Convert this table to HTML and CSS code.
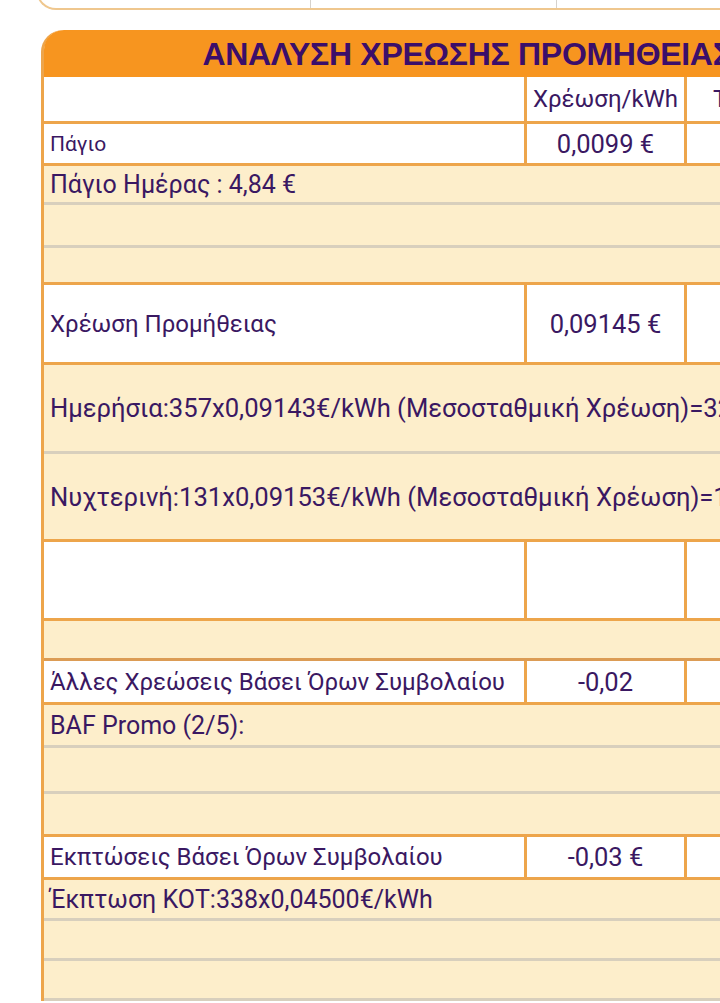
FILE: index.html
```html
<!DOCTYPE html>
<html lang="el">
<head>
  <meta charset="UTF-8">
  <meta name="viewport" content="width=device-width, initial-scale=1.0">
  <title>Ανάλυση Χρέωσης Προμήθειας</title>
  <link rel="stylesheet" href="styles.css">
</head>
<body>
  <!-- bottom edge of the previous box -->
  <div class="prev-box">
    <div class="prev-cell"></div>
    <div class="prev-cell"></div>
    <div class="prev-cell"></div>
  </div>

  <div class="panel">
    <div class="panel-title">ΑΝΑΛΥΣΗ ΧΡΕΩΣΗΣ ΠΡΟΜΗΘΕΙΑΣ</div>

    <div class="row white h47">
      <div class="c1"></div>
      <div class="c2 label">Χρέωση/kWh</div>
      <div class="c3">Τελικό Ποσό</div>
    </div>
    <div class="row white h42">
      <div class="c1 small">Πάγιο</div>
      <div class="c2">0,0099 €</div>
      <div class="c3"></div>
    </div>
    <div class="row cream gray-line h39">Πάγιο Ημέρας : 4,84 €</div>
    <div class="row cream gray-line h43"></div>
    <div class="row cream h37"></div>

    <div class="row white h80">
      <div class="c1">Χρέωση Προμήθειας</div>
      <div class="c2">0,09145 €</div>
      <div class="c3"></div>
    </div>
    <div class="row cream gray-line h89 wide">Ημερήσια:357x0,09143€/kWh (Μεσοσταθμική Χρέωση)=32,64 €</div>
    <div class="row cream h88 wide">Νυχτερινή:131x0,09153€/kWh (Μεσοσταθμική Χρέωση)=11,99 €</div>

    <div class="row white h79">
      <div class="c1"></div>
      <div class="c2"></div>
      <div class="c3"></div>
    </div>
    <div class="row cream dark-line h40"></div>

    <div class="row white h44">
      <div class="c1">Άλλες Χρεώσεις Βάσει Όρων Συμβολαίου</div>
      <div class="c2">-0,02</div>
      <div class="c3"></div>
    </div>
    <div class="row cream gray-line h43">BAF Promo (2/5):</div>
    <div class="row cream gray-line h46"></div>
    <div class="row cream h43"></div>

    <div class="row white h43">
      <div class="c1">Εκπτώσεις Βάσει Όρων Συμβολαίου</div>
      <div class="c2">-0,03 €</div>
      <div class="c3"></div>
    </div>
    <div class="row cream gray-line h41">Έκπτωση ΚΟΤ:338x0,04500€/kWh</div>
    <div class="row cream gray-line h40"></div>
    <div class="row cream gray-line h40"></div>
  </div>
</body>
</html>
```

FILE: styles.css
```css
body {
  margin: 0;
  background: #fff;
  font-family: Roboto, "Liberation Sans", Arial, sans-serif;
  color: #3a1862;
  overflow: hidden;
}

/* previous box, only its bottom edge shows */
.prev-box {
  display: flex;
  margin: -30px 0 0 36px;
  width: 860px;
  height: 40px;
  border: 2px solid #efc78e;
  border-top: none;
  border-bottom-left-radius: 20px;
  box-sizing: border-box;
}

.prev-cell {
  width: 272px;
  border-right: 1px solid #d6d2cc;
}

.prev-cell:nth-child(2) {
  width: 245px;
}

.prev-cell:last-child {
  border-right: none;
}

.panel {
  margin: 20px 0 0 41px;
  width: 846px;
  border-left: 3px solid #eda54b;
  border-top-left-radius: 22px;
}

.panel-title {
  height: 47px;
  line-height: 49px;
  background: #f7951f;
  border-top-left-radius: 20px;
  text-align: center;
  font-family: "Liberation Sans", Arial, sans-serif;
  font-weight: bold;
  font-size: 32px;
  letter-spacing: -0.3px;
  color: #3b0e6a;
}

.row {
  display: flex;
  align-items: center;
  box-sizing: border-box;
  border-bottom: 3px solid #eda54b;
  font-size: 24px;
  white-space: nowrap;
}

.white {
  background: #fff;
  align-items: stretch;
}

.cream {
  background: #fdeecb;
  padding-left: 6px;
  font-size: 25px;
}

.wide {
  font-size: 25.6px;
}

.gray-line {
  border-bottom-color: #d8cfbd;
}

.dark-line {
  border-bottom-color: #dc9c55;
}

.c1,
.c2,
.c3 {
  display: flex;
  align-items: center;
}

.c1 {
  width: 480px;
  padding-left: 6px;
  box-sizing: border-box;
}

.c2 {
  width: 160px;
  justify-content: center;
  border-left: 3px solid #eda54b;
  box-sizing: border-box;
  font-size: 25.5px;
}

.c2.label {
  font-size: 24px;
}

.c3 {
  flex: 1;
  padding-left: 26px;
  border-left: 3px solid #eda54b;
}

.small {
  font-size: 21px;
}

.h37 { height: 37px; }
.h39 { height: 39px; }
.h40 { height: 40px; }
.h41 { height: 41px; }
.h42 { height: 42px; }
.h43 { height: 43px; }
.h44 { height: 44px; }
.h46 { height: 46px; }
.h47 { height: 47px; }
.h79 { height: 79px; }
.h80 { height: 80px; }
.h88 { height: 88px; }
.h89 { height: 89px; }
```
